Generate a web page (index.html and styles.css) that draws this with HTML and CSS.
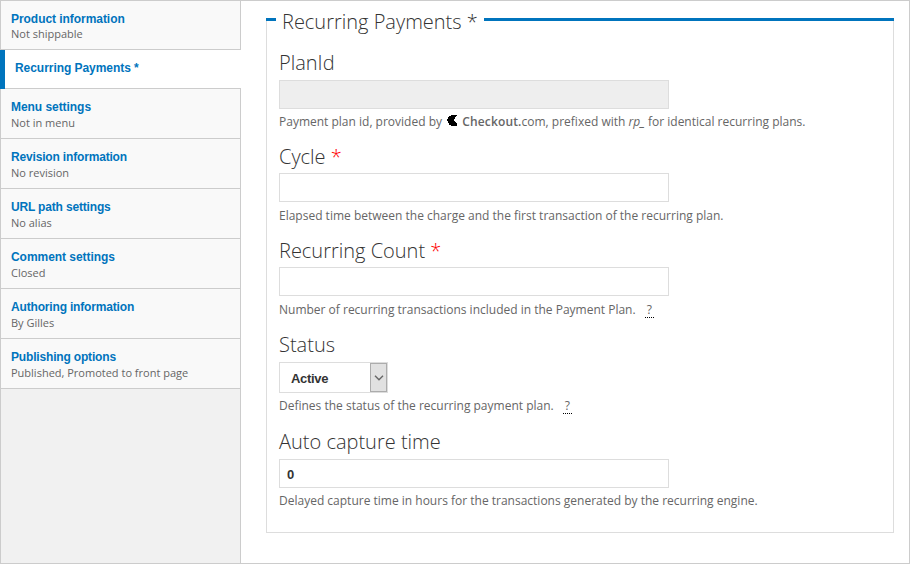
FILE: index.html
```html
<!DOCTYPE html>
<html lang="en">
<head>
<meta charset="utf-8">
<title>Recurring Payments</title>
<link rel="stylesheet" href="styles.css">
</head>
<body>
<div class="vertical-tabs">
  <ul class="tabs">
    <li class="tab"><a class="title">Product information</a><span class="summary">Not shippable</span></li>
    <li class="tab selected"><a class="title">Recurring Payments *</a></li>
    <li class="tab"><a class="title">Menu settings</a><span class="summary">Not in menu</span></li>
    <li class="tab"><a class="title tight">Revision information</a><span class="summary">No revision</span></li>
    <li class="tab"><a class="title tight">URL path settings</a><span class="summary">No alias</span></li>
    <li class="tab"><a class="title">Comment settings</a><span class="summary">Closed</span></li>
    <li class="tab"><a class="title tight">Authoring information</a><span class="summary">By Gilles</span></li>
    <li class="tab"><a class="title tight">Publishing options</a><span class="summary">Published, Promoted to front page</span></li>
  </ul>
  <main class="pane">
    <section class="group">
      <header class="legend"><span class="legend-text">Recurring Payments *</span></header>
      <div class="fields">
        <div class="field plan">
          <label class="label">PlanId</label>
          <div class="input disabled"></div>
          <p class="help">Payment plan id, provided by <svg class="logo" width="10" height="11" viewBox="0 0 10 11"><path d="M4 0H10V1H9V2H8V4H7V6H8V7H9V8H10V11H4V10H2V8H1V6H0V4H1V2H2V1H4Z"/></svg> <b>Checkout.</b>com, prefixed with <i>rp_</i> for identical recurring plans.</p>
        </div>
        <div class="field required-field">
          <label class="label">Cycle <span class="required">*</span></label>
          <div class="input"></div>
          <p class="help">Elapsed time between the charge and the first transaction of the recurring plan.</p>
        </div>
        <div class="field required-field">
          <label class="label">Recurring Count <span class="required">*</span></label>
          <div class="input"></div>
          <p class="help">Number of recurring transactions included in the Payment Plan. <span class="tip">?</span></p>
        </div>
        <div class="field status">
          <label class="label">Status</label>
          <div class="select"><span class="value">Active</span><span class="arrow"><svg width="10" height="6" viewBox="0 0 10 6"><path d="M1 .8L5 4.8L9 .8"/></svg></span></div>
          <p class="help">Defines the status of the recurring payment plan. <span class="tip">?</span></p>
        </div>
        <div class="field">
          <label class="label">Auto capture time</label>
          <div class="input">0</div>
          <p class="help">Delayed capture time in hours for the transactions generated by the recurring engine.</p>
        </div>
      </div>
    </section>
  </main>
</div>
</body>
</html>
```
FILE: styles.css
```css
* { box-sizing: border-box; }
body { margin: 0; background: #fff; color: #333; font-family: "Open Sans", sans-serif; }
.vertical-tabs {
  display: flex;
  width: 910px;
  height: 564px;
  background: linear-gradient(#ccc, #ccc) left / 1px 100% no-repeat;
  border: solid #ccc;
  border-width: 1px 1px 1px 0;
}
.tabs {
  width: 241px;
  margin: 0;
  padding: 0;
  list-style: none;
  background: #f1f1f1;
  border: solid #ccc;
  border-width: 0 1px;
}
.tab {
  display: flex;
  flex-direction: column;
  height: 50px;
  padding: 11px 10px 0;
  background: #f9f9f9;
  border-bottom: 1px solid #ccc;
}
.tab:first-child { height: 49px; }
.tab:first-child .summary { margin-top: -1px; }
.tab.selected {
  height: 39px;
  margin: 0 -1px;
  background: #fff;
  border-left: 5px solid #0074bd;
  border-bottom: 0;
  box-shadow: inset 0 -1px #ccc;
}
.title { font: bold 12px/15px "Liberation Sans", sans-serif; letter-spacing: -.05px; color: #0074bd; }
.title.tight { letter-spacing: -.17px; }
.summary { font-size: 11px; line-height: 15px; color: #666; }
.pane { flex: 1; padding: 8px 15px 30px 25px; }
.group { display: flex; flex-direction: column; width: 628px; height: 524px; }
.legend { display: flex; align-items: center; height: 21px; margin-bottom: -10px; z-index: 1; }
.legend::before, .legend::after { content: ""; height: 3px; background: #0074bd; }
.legend::before { width: 10px; }
.legend::after { flex: 1; }
.legend-text { width: 208px; padding: 4px 0 0 6px; font-size: 20px; font-weight: 300; line-height: 21px; white-space: nowrap; }
.fields { flex: 1; padding: 29px 12px 0; border: 1px solid #ddd; border-top: 0; }
.field { height: 94px; }
.field.status { height: 97px; }
.label { display: block; height: 31px; font-size: 20px; font-weight: 300; line-height: 27px; white-space: nowrap; }
.required-field .label { height: 30px; }
.required { color: #f00; }
.input { width: 390px; height: 29px; padding: 0 7px; border: 1px solid #ddd; background: #fff; font: bold 13px/29px "Liberation Sans", sans-serif; }
.disabled { background: #eee; }
.help { margin: 4px 0 0; font-size: 12px; line-height: 18px; color: #666; white-space: nowrap; }
.required-field .help { margin-top: 5px; }
.help b { font-weight: 600; letter-spacing: .15px; }
.logo { margin: 0 2px; fill: #000; shape-rendering: crispEdges; }
.tip { display: inline-block; margin-left: 6px; padding: 0 2px; line-height: 14px; border-bottom: 1px dotted #000; }
.select { display: flex; justify-content: space-between; width: 109px; height: 31px; padding-left: 11px; border: 1px solid #ddd; font: bold 13px/31px "Liberation Sans", sans-serif; }
.value { letter-spacing: -.3px; }
.arrow { display: flex; align-items: center; justify-content: center; width: 17px; height: 29px; background: #e1e1e1; border: 1px solid #acacac; }
.arrow path { fill: none; stroke: #666; stroke-width: 1.4; }
```
